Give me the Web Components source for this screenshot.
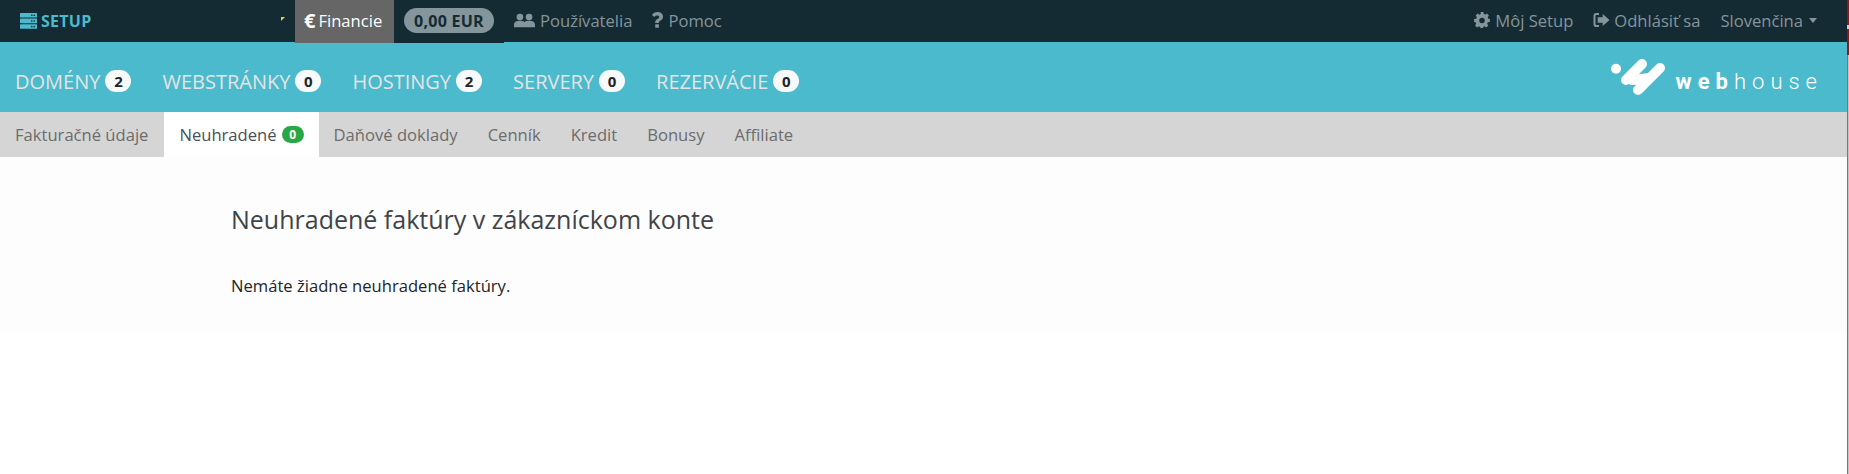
<!DOCTYPE html>
<html lang="sk">
<head>
<meta charset="utf-8">
<title>Neuhradené faktúry</title>
<style>
  html, body { margin: 0; padding: 0; background: #fff; }
  body { font-family: "Open Sans", "Liberation Sans", sans-serif; }
</style>
</head>
<body>
<top-bar></top-bar>
<service-bar></service-bar>
<sub-nav></sub-nav>
<invoice-panel></invoice-panel>
<edge-strip></edge-strip>

<script>
const ICONS = {
  server: '<svg width="17" height="16" viewBox="0 0 17 16"><g fill="#4bbacc"><rect x="0" y="0" width="17" height="4.6" rx=".6"/><rect x="0" y="5.6" width="17" height="4.6" rx=".6"/><rect x="0" y="11.2" width="17" height="4.6" rx=".6"/></g><g fill="#152b33"><rect x="11" y="1.7" width="1.500" height="1.300"/><rect x="13.500" y="1.700" width="1.500" height="1.300"/><rect x="11" y="7.300" width="1.500" height="1.300"/><rect x="13.500" y="7.300" width="1.500" height="1.300"/><rect x="11" y="12.900" width="1.500" height="1.300"/><rect x="13.500" y="12.900" width="1.500" height="1.300"/></g></svg>',
  users: '<svg width="21" height="15" viewBox="0 0 22 15" fill="#84959b"><circle cx="6.200" cy="3.900" r="3.500"/><circle cx="15.800" cy="3.900" r="3.500"/><path d="M0 14.600v-2.700C0 9.400 1.800 8 4 8h4.200c1.200 0 2.200.5 2.800 1.100C11.600 8.500 12.600 8 13.800 8H18c2.200 0 4 1.400 4 3.900v2.700z"/></svg>',
  help: '<svg width="11" height="16" viewBox="0 0 11 16" fill="#84959b"><path d="M5.700 0C2.900 0 1.200 1.200 0 3.100l2.300 1.800c.7-.9 1.500-1.500 2.900-1.500 1.200 0 2.100.6 2.100 1.500 0 1-.7 1.400-1.800 2C4.100 7.600 3.200 8.500 3.200 10.300v.8h3.700v-.6c0-.9.5-1.300 1.400-1.800C9.700 8 11 7.100 11 4.800 11 1.900 8.400 0 5.700 0z"/><rect x="3.200" y="12.200" width="3.700" height="3.600" rx=".5"/></svg>',
  cog: '<svg width="16" height="16" viewBox="0 0 16 16.200" fill="#84959b"><path fill-rule="evenodd" d="M6.600 0h2.800l.4 2.100c.5.2 1 .4 1.400.7l1.800-1.200 2 2-1.200 1.800c.3.4.5.9.7 1.400L16 7.200V10l-2.100.4c-.2.5-.4 1-.7 1.400l1.200 1.800-2 2-1.800-1.200c-.4.3-.9.5-1.400.7l-.4 2.100H6.600l-.4-2.100c-.5-.2-1-.4-1.400-.7l-1.800 1.200-2-2 1.200-1.800c-.3-.4-.5-.9-.7-1.400L0 10V7.200l2.100-.4c.2-.5.4-1 .7-1.400L1.600 3.600l2-2 1.800 1.200c.4-.3.900-.5 1.400-.7zM8 5.800a2.800 2.800 0 1 0 0 5.600 2.800 2.800 0 0 0 0-5.600z"/></svg>',
  signout: '<svg width="17" height="14" viewBox="0 0 16 14" fill="#84959b"><path d="M5.500 0v2H3a1 1 0 0 0-1 1v8a1 1 0 0 0 1 1h2.500v2H2.800A2.800 2.800 0 0 1 0 11.200V2.800A2.800 2.800 0 0 1 2.800 0z"/><path d="M9.200 1 16 7l-6.800 6V9.700H4.200V4.300h5z"/></svg>'
};

// top dark strip
class TopBar extends HTMLElement {
  constructor() {
    super();
    this.attachShadow({ mode: 'open' });
  }

  connectedCallback() {
    this.shadowRoot.innerHTML = `
      <style>
        :host { display: flex; position: relative; z-index: 1; height: 42px; background: #152b33; font-size: 16.6px; color: #84959b; align-items: flex-start; }
        .brand { width: 275px; height: 42px; padding-left: 20px; box-sizing: border-box; display: flex; align-items: center; gap: 4px; font-size: 16px; letter-spacing: .25px; font-weight: 700; color: #4bbacc; position: relative; }
        .spark { position: absolute; left: 281px; top: 17px; width: 0; height: 0; border-top: 4px solid #f0d030; border-right: 4px solid transparent; }
        .money { display: flex; height: 43px; margin-left: 20px; background: #152b33; }
        .active { width: 99px; box-sizing: border-box; padding-left: 9px; display: flex; align-items: center; gap: 3px; background: #666; color: #fff; }
        .active span:last-child { position: relative; top: -1px; }
        .euro { font-weight: 700; font-size: 20px; position: relative; top: -1px; }
        .balance { margin: 8px 10px 0; width: 90px; height: 25px; border-radius: 13px; background: #84959b; color: #152b33; font-size: 16px; letter-spacing: .25px; font-weight: 700; display: flex; align-items: center; justify-content: center; }
        .item { display: flex; height: 40px; align-items: center; gap: 5px; padding: 0 10px; white-space: nowrap; }
        .item.tight { gap: 4px; }
        .spacer { flex: 1; }
        .caret { width: 0; height: 0; border-top: 5px solid #84959b; border-left: 4.500px solid transparent; border-right: 4.500px solid transparent; margin-left: 1px; }
      </style>
      <div class="brand">${ICONS.server}<span>SETUP</span><span class="spark"></span></div>
      <div class="money">
        <div class="active"><span class="euro">€</span><span>Financie</span></div>
        <div class="balance">0,00 EUR</div>
      </div>
      <div class="item">${ICONS.users}<span>Používatelia</span></div>
      <div class="item">${ICONS.help}<span>Pomoc</span></div>
      <div class="spacer"></div>
      <div class="item">${ICONS.cog}<span>Môj Setup</span></div>
      <div class="item tight">${ICONS.signout}<span>Odhlásiť sa</span></div>
      <div class="item" style="padding-right:32px">Slovenčina<span class="caret"></span></div>
    `;
  }
}

class ServiceBar extends HTMLElement {
  constructor() {
    super();
    this.attachShadow({ mode: 'open' });
  }

  connectedCallback() {
    const items = [
      { name: 'DOMÉNY', count: 2 },
      { name: 'WEBSTRÁNKY', count: 0 },
      { name: 'HOSTINGY', count: 2 },
      { name: 'SERVERY', count: 0 },
      { name: 'REZERVÁCIE', count: 0 }
    ];
    this.shadowRoot.innerHTML = `
      <style>
        :host { display: flex; height: 70px; background: #4bbacc; align-items: center; padding: 8px 32px 0 15px; box-sizing: border-box; }
        .item { display: flex; align-items: center; gap: 5px; margin-right: 31px; font-size: 20px; color: #e4e4e4; white-space: nowrap; }
        .count { width: 26px; height: 22px; box-sizing: border-box; border-radius: 11px; background: #f8f9fa; color: #212529; font-size: 15px; font-weight: 700; display: flex; align-items: center; justify-content: center; }
        .logo { margin: -8px 0 0 auto; display: flex; align-items: center; gap: 9px; color: #fff; }
        .word { font-family: Roboto, "Open Sans", sans-serif; font-size: 22px; letter-spacing: 6px; font-weight: 300; margin-top: 9px; margin-right: -6px; }
        .word b { font-weight: 700; }
      </style>
      ${items
        .map(
          (i) => `<div class="item"><span>${i.name}</span><span class="count">${i.count}</span></div>`
        )
        .join('')}
      <div class="logo">
        <svg width="56" height="42" viewBox="0 0 56 42" fill="none" stroke="#fff" stroke-linecap="round" stroke-linejoin="round">
          <circle cx="5" cy="12.700" r="5" fill="#fff" stroke="none"/>
          <path d="M15 24 31 8M27 34 49 12M21 24 38 22" stroke-width="10"/>
        </svg>
        <div class="word"><b>web</b>house</div>
      </div>
    `;
  }
}

class SubNav extends HTMLElement {
  constructor() {
    super();
    this.attachShadow({ mode: 'open' });
  }

  connectedCallback() {
    const items = ['Fakturačné údaje', 'Neuhradené', 'Daňové doklady', 'Cenník', 'Kredit', 'Bonusy', 'Affiliate'];
    this.shadowRoot.innerHTML = `
      <style>
        :host { display: flex; height: 45px; background: #d5d5d5; font-size: 16.6px; color: #6c6c6c; }
        .tab { display: flex; align-items: center; gap: 5px; padding: 0 15px; white-space: nowrap; }
        .tab:first-of-type { padding-right: 16px; }
        .tab.active { background: #fff; color: #495057; }
        .count { width: 22px; height: 17px; border-radius: 9px; background: #28a745; color: #fff; font-size: 12px; font-weight: 700; display: flex; align-items: center; justify-content: center; }
      </style>
      ${items
        .map((t) =>
          t === 'Neuhradené'
            ? `<div class="tab active"><span>${t}</span><span class="count">0</span></div>`
            : `<div class="tab">${t}</div>`
        )
        .join('')}
    `;
  }
}

class InvoicePanel extends HTMLElement {
  constructor() {
    super();
    this.attachShadow({ mode: 'open' });
  }

  connectedCallback() {
    this.shadowRoot.innerHTML = `
      <style>
        :host { display: block; height: 176px; box-sizing: border-box; background: #fdfdfd; padding: 0 0 0 231px; }
        h2 { margin: 0; padding-top: 47px; font-size: 25px; line-height: 30px; font-weight: 400; color: #3f4449; }
        p { margin: 0; padding-top: 40px; font-size: 16.6px; line-height: 24px; color: #212529; }
      </style>
      <h2>Neuhradené faktúry v zákazníckom konte</h2>
      <p>Nemáte žiadne neuhradené faktúry.</p>
    `;
  }
}

// thin strip on the right window edge, lies over everything
class EdgeStrip extends HTMLElement {
  constructor() {
    super();
    this.attachShadow({ mode: 'open' });
  }

  connectedCallback() {
    this.shadowRoot.innerHTML = `
      <style>
        :host { display: block; position: absolute; z-index: 2; top: 0; right: 0; width: 2px; height: 474px; background: linear-gradient(90deg, #777 50%, #c4c4c4 50%); }
        .red { height: 55px; background: #8b1a1a; position: relative; }
        .tick { position: absolute; top: 25px; left: 0; width: 2px; height: 4px; background: #ccc; }
      </style>
      <div class="red"><div class="tick"></div></div>
    `;
  }
}

customElements.define('top-bar', TopBar);
customElements.define('service-bar', ServiceBar);
customElements.define('sub-nav', SubNav);
customElements.define('invoice-panel', InvoicePanel);
customElements.define('edge-strip', EdgeStrip);
</script>
</body>
</html>
